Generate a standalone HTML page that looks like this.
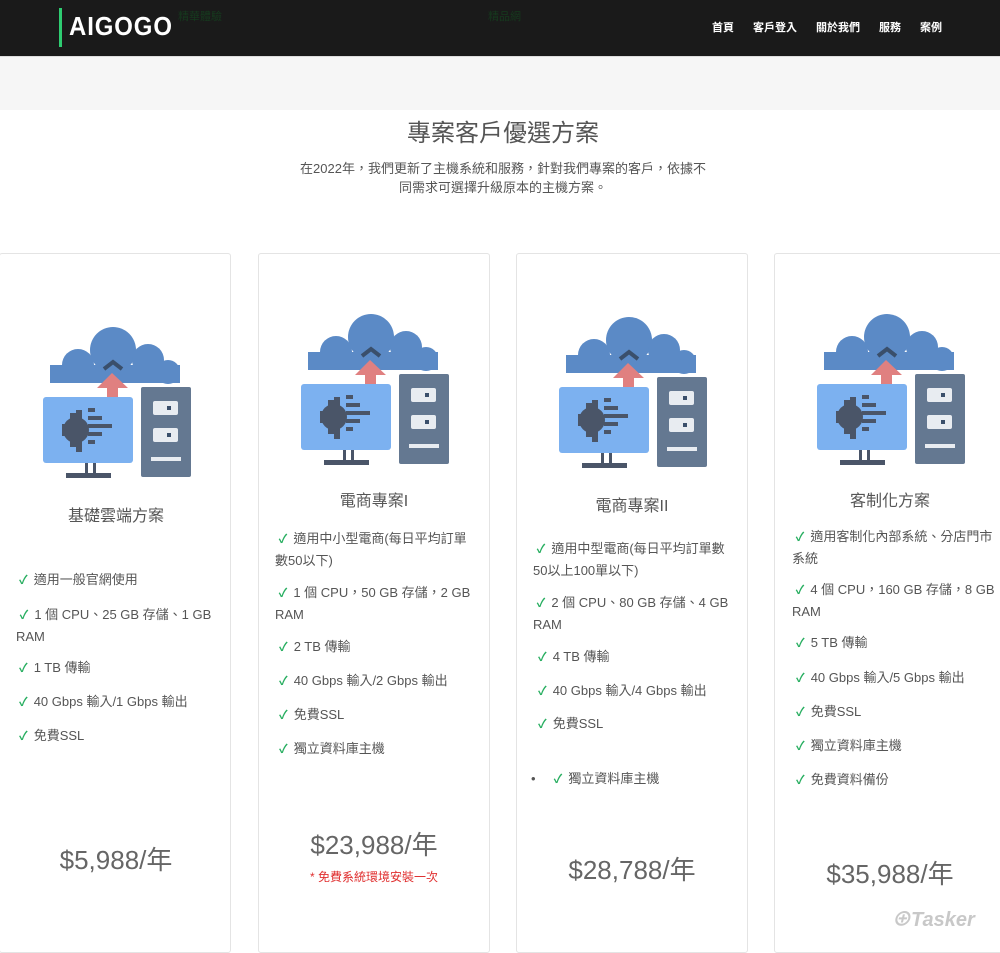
<!DOCTYPE html>
<html><head><meta charset="utf-8"><style>
*{margin:0;padding:0;box-sizing:border-box}
body{width:1000px;height:937px;overflow:hidden;background:#fff;font-family:"Liberation Sans","Noto Sans CJK TC",sans-serif;color:#555;position:relative}
.hdr{position:absolute;left:0;top:0;width:1000px;height:56px;background:#1a1a1a}
.bar{position:absolute;left:59px;top:8px;width:3px;height:39px;background:#2ecc71}
.logo{position:absolute;left:69px;top:11px;color:#fff;font-size:26px;font-weight:bold;letter-spacing:1px;transform:scaleX(0.92);transform-origin:left}
.nav{position:absolute;top:19px;color:#fff;font-size:11px;font-weight:bold}
.band{position:absolute;left:0;top:56px;width:1000px;height:54px;background:#f6f6f6;border-top:1px solid #ddd}
.t{position:absolute;white-space:nowrap}
.card{position:absolute;top:253px;width:232px;height:700px;border:1px solid #e4e4e4;border-radius:3px}
.it{position:absolute;white-space:nowrap;font-size:13px;line-height:21px;color:#555}
.ck{color:#27ae60;font-size:12px;margin-right:6px;font-weight:bold}
.ti{position:absolute;font-size:16px;color:#555;text-align:center;width:232px}
.pr{position:absolute;font-size:26px;color:#666;text-align:center;width:232px}
svg{position:absolute}
</style></head><body>
<div class="hdr"><div class="bar"></div><div class="logo">AIGOGO</div>
<div class="t" style="left:178px;top:8px;font-size:11px;color:#163a1e">精華體驗</div>
<div class="t" style="left:488px;top:8px;font-size:11px;color:#163a1e">精品網</div>
<div class="nav" style="left:712px">首頁</div><div class="nav" style="left:753px">客戶登入</div><div class="nav" style="left:816px">關於我們</div><div class="nav" style="left:879px">服務</div><div class="nav" style="left:920px">案例</div></div>
<div class="band"></div>
<div class="t" style="left:0;width:1006px;text-align:center;top:113px;font-size:24px;color:#555">專案客戶優選方案</div>
<div class="t" style="left:0;width:1006px;text-align:center;top:159px;font-size:13px;line-height:19px;color:#555">在2022年，我們更新了主機系統和服務，針對我們專案的客戶，依據不<br>同需求可選擇升級原本的主機方案。</div>

<svg width="0" height="0"><defs><g id="ic">
<circle cx="73" cy="30" r="23" fill="#5b8ac6"/><circle cx="38" cy="45" r="16" fill="#5b8ac6"/><circle cx="108" cy="40" r="16" fill="#5b8ac6"/><circle cx="128" cy="52" r="12" fill="#5b8ac6"/>
<rect x="10" y="45" width="130" height="18" fill="#5b8ac6"/>
<path d="M64 49 L73 42 L82 49" stroke="#3a4f6b" stroke-width="4" fill="none"/>
<path d="M57 68 L72 53 L88 68 Z M67 67 H78 V84 H67Z" fill="#e08080"/>
<rect x="3" y="77" width="90" height="66" rx="3" fill="#7cb1f0"/>
<circle cx="36" cy="110" r="13" fill="#4a5568"/><rect x="36" y="90" width="6" height="42" fill="#4a5568"/>
<rect x="22" y="104" width="6" height="12" fill="#4a5568"/>
<rect x="30" y="93" width="6" height="34" fill="#4a5568"/>
<rect x="48" y="88" width="7" height="4" fill="#4a5568"/><rect x="48" y="96" width="14" height="4" fill="#4a5568"/><rect x="48" y="104" width="24" height="4" fill="#4a5568"/><rect x="48" y="112" width="14" height="4" fill="#4a5568"/><rect x="48" y="120" width="7" height="4" fill="#4a5568"/>
<rect x="45" y="143" width="3" height="12" fill="#4a5568"/><rect x="53" y="143" width="3" height="12" fill="#4a5568"/><rect x="26" y="153" width="45" height="5" fill="#4a5568"/>
<rect x="101" y="67" width="50" height="90" rx="2" fill="#647891"/>
<rect x="113" y="81" width="25" height="14" rx="2" fill="#e8ecf1"/><rect x="127" y="86" width="4" height="4" fill="#3a4f6b"/>
<rect x="113" y="108" width="25" height="14" rx="2" fill="#e8ecf1"/><rect x="127" y="113" width="4" height="4" fill="#3a4f6b"/>
<rect x="111" y="137" width="30" height="4" fill="#e8ecf1"/>
</g></defs></svg>

<div class="card" style="left:-1px"></div>
<div class="card" style="left:258px"></div>
<div class="card" style="left:516px"></div>
<div class="card" style="left:774px"></div>

<svg style="left:40px;top:320px" width="160" height="170"><use href="#ic"/></svg>
<svg style="left:298px;top:307px" width="160" height="170"><use href="#ic"/></svg>
<svg style="left:556px;top:310px" width="160" height="170"><use href="#ic"/></svg>
<svg style="left:814px;top:307px" width="160" height="170"><use href="#ic"/></svg>

<div class="ti" style="left:0;top:502px">基礎雲端方案</div>
<div class="it" style="left:19px;top:569px"><span class="ck">✓</span>適用一般官網使用</div>
<div class="it" style="left:16px;top:604px">&nbsp;<span class="ck">✓</span>1 個 CPU、25 GB 存儲、1 GB<br>RAM</div>
<div class="it" style="left:19px;top:657px"><span class="ck">✓</span>1 TB 傳輸</div>
<div class="it" style="left:19px;top:691px"><span class="ck">✓</span>40 Gbps 輸入/1 Gbps 輸出</div>
<div class="it" style="left:19px;top:725px"><span class="ck">✓</span>免費SSL</div>
<div class="pr" style="left:0;top:840px">$5,988/年</div>

<div class="ti" style="left:258px;top:487px">電商專案I</div>
<div class="it" style="left:275px;top:528px">&nbsp;<span class="ck">✓</span>適用中小型電商(每日平均訂單<br>數50以下)</div>
<div class="it" style="left:275px;top:582px">&nbsp;<span class="ck">✓</span>1 個 CPU，50 GB 存儲，2 GB<br>RAM</div>
<div class="it" style="left:279px;top:636px"><span class="ck">✓</span>2 TB 傳輸</div>
<div class="it" style="left:279px;top:670px"><span class="ck">✓</span>40 Gbps 輸入/2 Gbps 輸出</div>
<div class="it" style="left:279px;top:704px"><span class="ck">✓</span>免費SSL</div>
<div class="it" style="left:279px;top:738px"><span class="ck">✓</span>獨立資料庫主機</div>
<div class="pr" style="left:258px;top:825px">$23,988/年</div>
<div class="t" style="left:258px;width:232px;text-align:center;top:868px;font-size:12px;color:#e03030">* 免費系統環境安裝一次</div>

<div class="ti" style="left:516px;top:492px">電商專案II</div>
<div class="it" style="left:533px;top:538px">&nbsp;<span class="ck">✓</span>適用中型電商(每日平均訂單數<br>50以上100單以下)</div>
<div class="it" style="left:533px;top:592px">&nbsp;<span class="ck">✓</span>2 個 CPU、80 GB 存儲、4 GB<br>RAM</div>
<div class="it" style="left:538px;top:646px"><span class="ck">✓</span>4 TB 傳輸</div>
<div class="it" style="left:538px;top:680px"><span class="ck">✓</span>40 Gbps 輸入/4 Gbps 輸出</div>
<div class="it" style="left:538px;top:713px"><span class="ck">✓</span>免費SSL</div>
<div class="it" style="left:531px;top:768px">•&nbsp;&nbsp;&nbsp;&nbsp;&nbsp;<span class="ck">✓</span>獨立資料庫主機</div>
<div class="pr" style="left:516px;top:850px">$28,788/年</div>

<div class="ti" style="left:774px;top:487px">客制化方案</div>
<div class="it" style="left:792px;top:526px">&nbsp;<span class="ck">✓</span>適用客制化內部系統、分店門市<br>系統</div>
<div class="it" style="left:792px;top:579px">&nbsp;<span class="ck">✓</span>4 個 CPU，160 GB 存儲，8 GB<br>RAM</div>
<div class="it" style="left:796px;top:632px"><span class="ck">✓</span>5 TB 傳輸</div>
<div class="it" style="left:796px;top:667px"><span class="ck">✓</span>40 Gbps 輸入/5 Gbps 輸出</div>
<div class="it" style="left:796px;top:701px"><span class="ck">✓</span>免費SSL</div>
<div class="it" style="left:796px;top:735px"><span class="ck">✓</span>獨立資料庫主機</div>
<div class="it" style="left:796px;top:769px"><span class="ck">✓</span>免費資料備份</div>
<div class="pr" style="left:774px;top:854px">$35,988/年</div>

<div class="t" style="left:891px;top:903px;font-size:20px;font-weight:bold;color:#c8c8c8;font-style:italic">⊕Tasker</div>
</body></html>
